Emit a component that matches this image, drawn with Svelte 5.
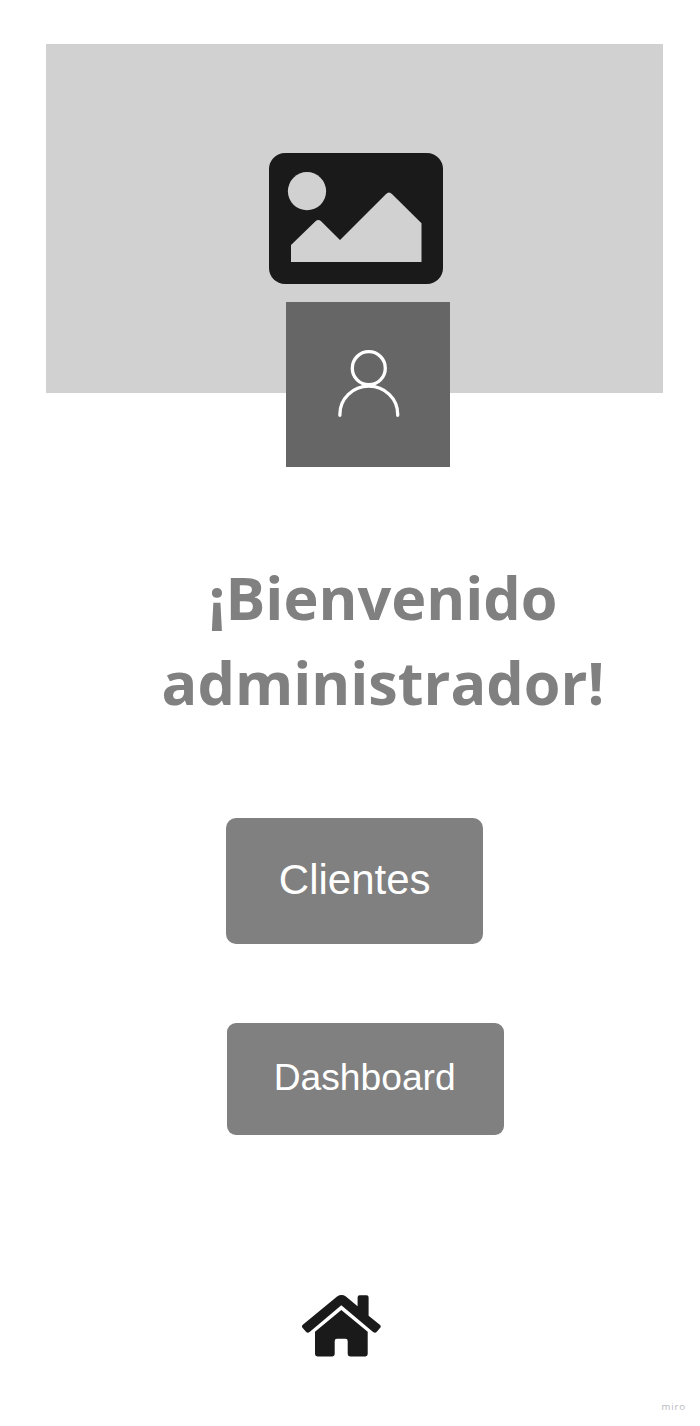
<script>
  const actions = [
    { label: 'Clientes', kind: 'clients' },
    { label: 'Dashboard', kind: 'dashboard' },
  ];
</script>

<main class="screen">
  <header class="banner">
    <svg class="picture" viewBox="0 0 174 131" aria-hidden="true">
      <rect width="174" height="131" rx="16" fill="#1a1a1a" />
      <circle cx="38" cy="38.2" r="19.1" fill="#d1d1d1" />
      <path d="M22 109V92L46.5 68.3Q49.3 65.6 52.1 68.3L71 87L116.8 41.2Q120 38 123.2 41.2L152.5 70.2V109Z" fill="#d1d1d1" />
    </svg>
    <div class="avatar">
      <svg viewBox="0 0 62 68" aria-hidden="true">
        <g fill="none" stroke="#fff" stroke-width="3.3" stroke-linecap="round">
          <circle cx="30.8" cy="18.2" r="16.5" />
          <path d="M1.9 65.3V64.2a28.9 28 0 0 1 57.8 0v1.1" />
        </g>
      </svg>
    </div>
  </header>

  <h1>¡Bienvenido<br />administrador!</h1>

  <nav class="actions">
    {#each actions as action}
      <button class={action.kind}>{action.label}</button>
    {/each}
  </nav>

  <footer>
    <svg class="home" viewBox="-0.6 0 80 62" aria-hidden="true">
      <g fill="#1a1a1a">
        <path d="M1.2 29.7L35.5 1.5Q40 -1.4 44.3 1.5L56 11.3V2.3Q56 .3 58 .3H65Q67 .3 67 2.3V20.7L78.2 29.7Q80 31.3 78.4 33L75.2 36.8Q73.5 38.5 71.5 37L39.7 10.3L8 37Q6 38.5 4.4 36.8L1.1 33Q-.4 31.3 1.2 29.7Z" />
        <path d="M13.4 36.8L39.7 15.1L66.1 36.8V59Q66.1 61.4 63.7 61.4H48.5Q46.1 61.4 46.1 59V46Q46.1 43.8 43.9 43.8H35.3Q33.1 43.8 33.1 46V59Q33.1 61.4 30.7 61.4H15.8Q13.4 61.4 13.4 59Z" />
      </g>
    </svg>
    <span class="brand">miro</span>
  </footer>
</main>

<style>
  :global(body) {
    margin: 0;
    background: #fff;
  }
  .screen {
    box-sizing: border-box;
    width: 700px;
    height: 1426px;
    padding-top: 44px;
    display: flex;
    flex-direction: column;
    overflow: hidden;
    background: #fff;
  }
  .banner {
    position: relative;
    flex: none;
    box-sizing: border-box;
    width: 617.4px;
    height: 348.6px;
    margin-left: 45.6px;
    padding: 109px 0 0 223.4px;
    background: #d1d1d1;
  }
  .picture {
    display: block;
    width: 174px;
    height: 131px;
  }
  .avatar {
    position: absolute;
    left: 240.1px;
    top: 258.3px;
    width: 164.6px;
    height: 164.6px;
    display: grid;
    place-items: center;
    background: #666;
  }
  .avatar svg {
    width: 62px;
    height: 68px;
    margin: 0 0 2px 2px;
  }
  h1 {
    flex: none;
    width: 500px;
    margin: 162.4px 0 0 133px;
    font: 700 59.3px/85px "Open Sans", "Noto Sans", sans-serif;
    color: #808080;
    text-align: center;
  }
  .actions {
    flex: none;
    display: flex;
    flex-direction: column;
    align-items: flex-start;
    gap: 79px;
    margin: 93px 0 0 226px;
  }
  button {
    border: 0;
    padding: 0 0 2px;
    color: #fff;
    background: #808080;
    font-family: "Liberation Sans", Arial, sans-serif;
  }
  .clients {
    width: 257.4px;
    height: 126px;
    border-radius: 10px;
    font-size: 42px;
  }
  .dashboard {
    width: 277.4px;
    height: 112px;
    margin-left: 0.5px;
    padding-right: 1px;
    border-radius: 9px;
    font-size: 37.2px;
  }
  footer {
    flex: 1;
    display: flex;
    justify-content: space-between;
    padding: 160px 14px 0 301px;
  }
  .home {
    width: 80px;
    height: 62px;
  }
  .brand {
    align-self: flex-end;
    margin-bottom: 12px;
    font: 9.6px/14px "Open Sans", sans-serif;
    letter-spacing: 0.9px;
    color: #b8b8c0;
  }
</style>
